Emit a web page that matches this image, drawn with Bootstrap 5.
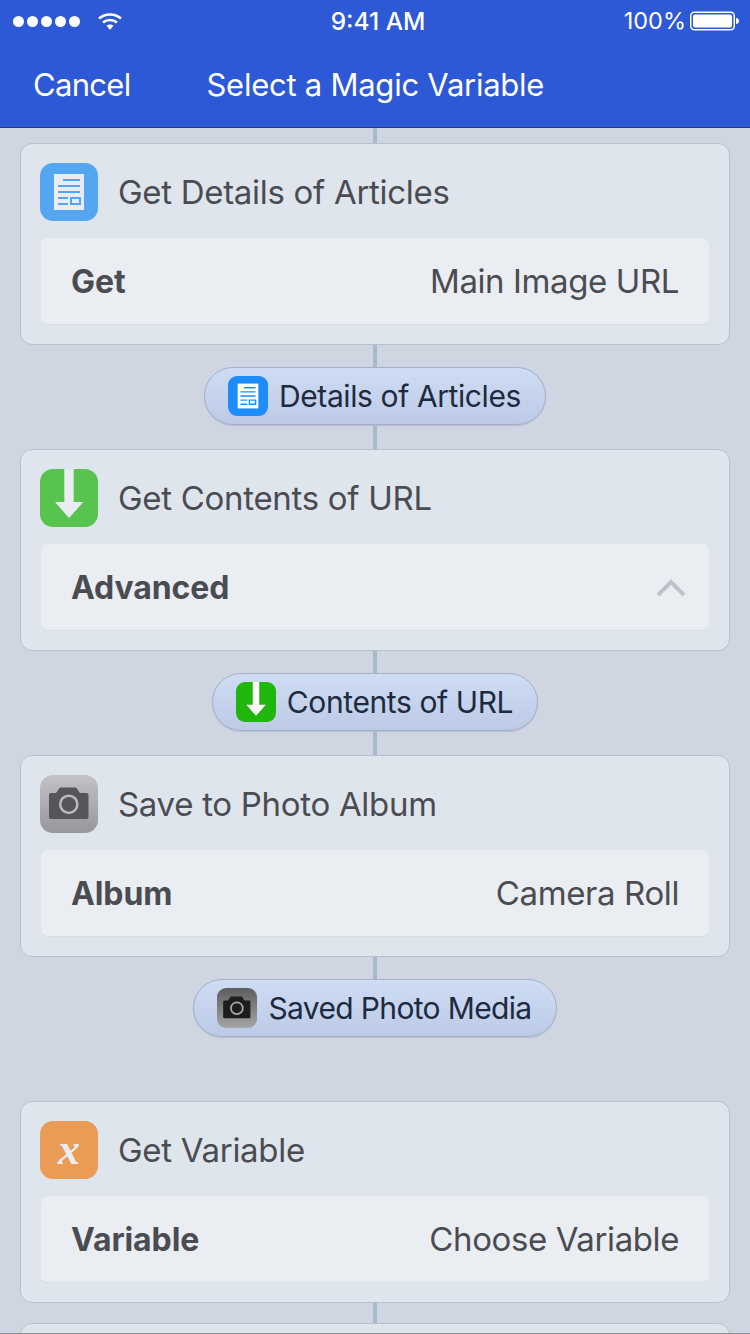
<!DOCTYPE html>
<html lang="en">

<head>
  <meta charset="UTF-8">
  <meta name="viewport" content="width=device-width, initial-scale=1.0">
  <title>Select a Magic Variable</title>

  <link href="https://cdn.jsdelivr.net/npm/bootstrap@5.3.0/dist/css/bootstrap.min.css" rel="stylesheet">

  <style>
    html, body {
      height: 1334px;
      overflow: hidden;
    }

    body {
      width: 750px;
      background-color: #cfd6e1;
      font-family: "Inter", "Roboto", sans-serif;
    }

    .top-bar {
      height: 128px;
      background-color: #2d58d6;
      border-bottom: 1px solid #1f3c8f;
      color: #fff;
    }

    .status-line {
      height: 42px;
      padding: 0 11px 0 13px;
      font-size: 23.500px;
    }

    .status-side {
      width: 200px;
    }

    .status-time {
      font-size: 24.500px;
      margin-left: 4px;
    }

    .signal-dot {
      width: 11px;
      height: 11px;
      border-radius: 50%;
      background-color: #fff;
      margin-right: 3px;
    }

    .wifi-mark {
      margin-left: 14px;
    }

    .battery-mark {
      margin-left: 4px;
    }

    .nav-line {
      height: 85px;
      padding: 1px 0 0 33px;
      font-size: 31px;
    }

    .nav-cancel {
      letter-spacing: -0.700px;
    }

    .nav-title {
      margin-left: 76px;
      letter-spacing: -0.250px;
    }

    .flow-wrap {
      height: 1206px;
      padding: 0 20px;
      overflow: hidden;
      border-bottom: 1px solid #8c9198;
    }

    .link-line {
      width: 4px;
      background-color: #a8bac8;
      margin-left: 353px;
    }

    .step-card {
      height: 202px;
      padding: 19px;
      background-color: #dfe5ed;
      border: 1px solid #b5c3ce;
      border-radius: 12px;
    }

    .step-icon {
      width: 58px;
      height: 58px;
      border-radius: 13px;
      flex-shrink: 0;
    }

    .step-title {
      padding-top: 2px;
      font-size: 33px;
      letter-spacing: -0.300px;
      color: #4a4c52;
    }

    .step-row {
      height: 88px;
      margin-top: 16px;
      padding: 2px 30px 0;
      background-color: #eaeef3;
      border: 1px solid #dfe5ed;
      border-bottom-color: #d6dde6;
      border-radius: 8px;
      font-size: 33px;
      letter-spacing: -0.400px;
      color: #4a4c52;
    }

    .step-row b {
      font-size: 32px;
      font-weight: 700;
      letter-spacing: -0.100px;
    }

    .row-chevron {
      margin-right: -7px;
    }

    .var-pill {
      height: 58px;
      padding: 0 24px 0 23px;
      gap: 11px;
      border: 1px solid #a5b0c6;
      border-radius: 29px;
      background: linear-gradient(#cedcf4, #bccae6);
      box-shadow: 0 1px 1px #b2bdd0;
      font-size: 30px;
      letter-spacing: -0.400px;
      color: #1e2a3e;
    }

    .var-pill.pill-tight {
      letter-spacing: -0.650px;
    }

    .pill-icon {
      width: 40px;
      height: 40px;
      border-radius: 9px;
      flex-shrink: 0;
    }

    .var-x {
      font-family: "Liberation Serif", serif;
      font-style: italic;
      font-weight: 700;
      font-size: 44px;
      line-height: 1;
      color: #e9edf3;
    }

    .bg-doc { background-color: #55a6f0; }
    .bg-get { background-color: #58c34f; }
    .bg-cam { background: linear-gradient(#c1c3c7, #95979d); }
    .bg-var { background-color: #ea9b55; }
    .bg-doc-pill { background-color: #1e8cfa; }
    .bg-get-pill { background-color: #21b60b; }
    .bg-cam-pill { background: linear-gradient(#5d5d5f, #a5a5a7); }
  </style>
</head>

<body>
  <svg width="0" height="0" class="position-absolute">
    <symbol id="doc" viewBox="0 0 58 58">
      <path d="M14 11h30v36H14z" fill="currentColor"/>
      <path d="M23 17h17M18 23h22M18 29h22M18 35h10M18 41h10" stroke="var(--ink)" stroke-width="2" fill="none"/>
      <path d="M31 35h9v6h-9z" stroke="var(--ink)" stroke-width="2" fill="none"/>
    </symbol>
    <symbol id="down" viewBox="0 0 58 58">
      <path d="M24.300 0h9.400v33h9.600L29 49 15 33h9.300z" fill="currentColor"/>
    </symbol>
    <symbol id="cam" viewBox="0 0 58 58">
      <path d="M11 18h5l4-5.500h16l4 5.500h6.500a2 2 0 0 1 2 2v22a2 2 0 0 1-2 2H11a2 2 0 0 1-2-2V20a2 2 0 0 1 2-2z" fill="var(--ink)"/>
      <circle cx="28.800" cy="29.300" r="8.600" fill="none" stroke="currentColor" stroke-width="2.500"/>
    </symbol>
  </svg>

  <header class="top-bar">
    <div class="status-line d-flex align-items-center justify-content-between">
      <div class="status-side d-flex align-items-center">
        <span class="signal-dot"></span><span class="signal-dot"></span><span class="signal-dot"></span><span class="signal-dot"></span><span class="signal-dot"></span>
        <svg class="wifi-mark" width="26" height="20" viewBox="0 0 26 20" fill="none" stroke="#fff" stroke-width="2.500">
          <path d="M2 7.500c6-5.500 16-5.500 22 0M6 11.500c4-3.500 10-3.500 14 0"/>
          <path d="M9.500 14.500 13 19l3.500-4.500c-2-1.500-5-1.500-7 0z" fill="#fff" stroke="none"/>
        </svg>
      </div>
      <div class="status-time fw-medium">9:41 AM</div>
      <div class="status-side d-flex align-items-center justify-content-end">
        <span>100%</span>
        <svg class="battery-mark" width="49" height="20" viewBox="0 0 49 20">
          <rect x="0.750" y="1.250" width="43.500" height="17.500" rx="3.500" fill="none" stroke="#fff" stroke-width="1.500"/>
          <rect x="3" y="3.500" width="39" height="13" rx="2" fill="#fff"/>
          <path d="M46 7c1.500 0 3 1 3 3s-1.500 3-3 3z" fill="#fff"/>
        </svg>
      </div>
    </div>
    <div class="nav-line d-flex align-items-center">
      <span class="nav-cancel">Cancel</span>
      <span class="nav-title">Select a Magic Variable</span>
    </div>
  </header>

  <main class="flow-wrap" id="flow"></main>

  <script>
    // Steps of the workflow, top to bottom
    const steps = [
      { title: 'Get Details of Articles', iconBg: 'bg-doc', icon: 'doc', fg: '#e9edf3', ink: '#55a6f0', label: 'Get', value: 'Main Image URL',
        pill: 'Details of Articles', pillBg: 'bg-doc-pill', pillFg: '#fff', pillInk: '#1e8cfa', before: 15 },
      { title: 'Get Contents of URL', iconBg: 'bg-get', icon: 'down', fg: '#e9edf3', ink: '#58c34f', label: 'Advanced', chevron: true,
        pill: 'Contents of URL', pillBg: 'bg-get-pill', pillFg: '#fff', pillInk: '#21b60b', before: 24 },
      { title: 'Save to Photo Album', iconBg: 'bg-cam', icon: 'cam', fg: '#b9bbbf', ink: '#55565a', label: 'Album', value: 'Camera Roll',
        pill: 'Saved Photo Media', pillBg: 'bg-cam-pill', pillFg: '#a9a9ab', pillInk: '#1d1d1f', pillClass: 'pill-tight', before: 24 },
      { title: 'Get Variable', iconBg: 'bg-var', letter: 'x', label: 'Variable', value: 'Choose Variable', gap: 64 },
    ];

    const useIcon = (name, fg, ink, size) =>
      `<svg class="d-block" width="${size}" height="${size}" style="color:${fg};--ink:${ink}"><use href="#${name}"/></svg>`;

    const chevronUp = `<svg class="row-chevron" width="30" height="18" viewBox="0 0 30 18" fill="none" stroke="#bdc2cc" stroke-width="4"><path d="M2 16 15 3l13 13"/></svg>`;

    const renderStep = (s) => `
      ${s.before ? `<div class="link-line" style="height:${s.before}px"></div>` : ''}
      ${s.gap ? `<div style="height:${s.gap}px"></div>` : ''}
      <section class="step-card">
        <div class="d-flex align-items-center gap-3">
          <div class="step-icon ${s.iconBg} d-flex align-items-center justify-content-center">
            ${s.letter ? `<span class="var-x">${s.letter}</span>` : useIcon(s.icon, s.fg, s.ink, 58)}
          </div>
          <div class="step-title ms-1">${s.title}</div>
        </div>
        <div class="step-row d-flex align-items-center justify-content-between">
          <b>${s.label}</b>
          ${s.chevron ? chevronUp : `<span>${s.value}</span>`}
        </div>
      </section>
      ${s.pill ? `
        <div class="link-line" style="height:22px"></div>
        <div class="d-flex justify-content-center">
          <div class="var-pill ${s.pillClass || ''} d-inline-flex align-items-center">
            <div class="pill-icon ${s.pillBg}">${useIcon(s.icon, s.pillFg, s.pillInk, 40)}</div>
            <span>${s.pill}</span>
          </div>
        </div>` : ''}
    `;

    document.getElementById('flow').innerHTML = steps.map(renderStep).join('') + `
      <div class="link-line" style="height:20px"></div>
      <section class="step-card"></section>`;
  </script>

  <script src="https://cdn.jsdelivr.net/npm/bootstrap@5.3.0/dist/js/bootstrap.bundle.min.js"></script>
</body>

</html>
